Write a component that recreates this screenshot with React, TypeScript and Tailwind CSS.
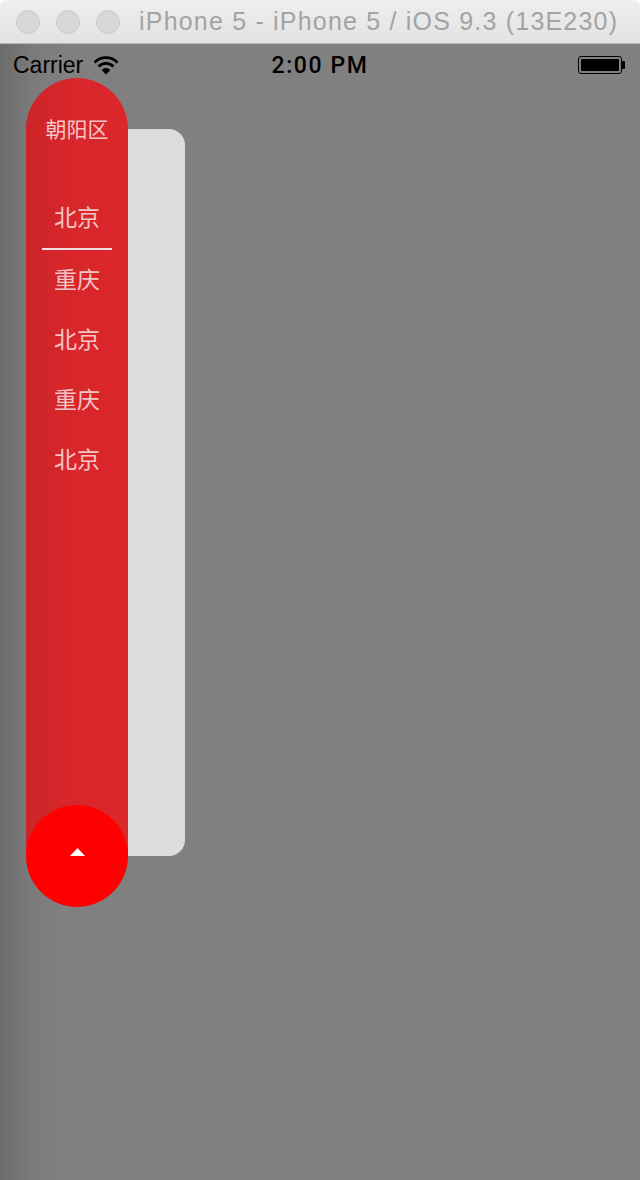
const cities = ["北京", "重庆", "北京", "重庆", "北京"];

const TitleBar = () => (
  <div className="h-[44px] flex items-center pl-[16px] gap-[16px] rounded-t-[6px] bg-[linear-gradient(to_bottom,#eeeeee,#e3e3e3)] border-b border-[#b4b4b4]">
    {[0, 1, 2].map((i) => (
      <span
        key={i}
        className="w-[24px] h-[24px] rounded-full bg-[#d7d7d7] border border-[#cacaca]"
      />
    ))}
    <span className="ml-[3px] text-[25px] tracking-[1.2px] leading-none text-[#a3a3a3] font-['Liberation_Sans',sans-serif]">
      iPhone 5 - iPhone 5 / iOS 9.3 (13E230)
    </span>
  </div>
);

const StatusBar = () => (
  <div className="h-[34px] pt-[8px] px-[13px] flex items-center justify-between text-black font-['Liberation_Sans',sans-serif]">
    <div className="flex items-center gap-[10px] w-[160px]">
      <span className="text-[23px] leading-none">Carrier</span>
      <svg width="26" height="20" viewBox="0 0 26 20" fill="none">
        <path d="M1.5 7.5 A16 16 0 0 1 24.5 7.5" stroke="black" strokeWidth="2.6" />
        <path d="M5.5 11.5 A10.5 10.5 0 0 1 20.5 11.5" stroke="black" strokeWidth="2.6" />
        <path d="M13 19.5 L8.6 15 A6 6 0 0 1 17.4 15 Z" fill="black" />
      </svg>
    </div>
    <span className="text-[23px] leading-none font-medium tracking-[1.6px] font-['Roboto',sans-serif]">
      2:00 PM
    </span>
    <div className="w-[160px] flex justify-end items-center pr-[2px]">
      <div className="w-[44px] h-[18px] rounded-[3px] border border-black p-[2px]">
        <div className="w-full h-full bg-black rounded-[1px]" />
      </div>
      <div className="w-[3px] h-[8px] bg-black rounded-r-[1px]" />
    </div>
  </div>
);

const Picker = () => (
  <div className="flex items-start pl-[26px]">
    <div className="flex flex-col w-[102px]">
      <div className="h-[778px] rounded-t-[51px] pt-[38px] flex flex-col items-center bg-[linear-gradient(to_right,#cb2529,#d9262a_45%,#dc272b)] text-[#f2c6c6] font-['Noto_Sans_CJK_SC',sans-serif]">
        <div className="h-[24px] leading-[24px] text-[21px]">朝阳区</div>
        <div className="mt-[50px] flex flex-col items-center">
          {cities.map((city, i) => (
            <div
              key={i}
              className={`w-[70px] h-[60px] pb-[6px] flex items-center justify-center text-[23px] ${
                i === 0 ? "h-[59px] border-b-2 border-[#f6dede] mb-[1px]" : ""
              }`}
            >
              {city}
            </div>
          ))}
        </div>
      </div>
      <button className="-mt-[51px] w-[102px] h-[102px] rounded-full bg-[#ff0000] flex items-center justify-center">
        <svg width="15" height="8" viewBox="0 0 15 8" className="mb-[8px]">
          <path d="M7.5 0 L15 8 L0 8 Z" fill="white" />
        </svg>
      </button>
    </div>
    <div className="mt-[51px] w-[57px] h-[727px] bg-[#dcdcdc] rounded-r-[16px]" />
  </div>
);

export default function App() {
  return (
    <div className="w-[640px] h-[1180px] bg-white overflow-hidden">
      <TitleBar />
      <div className="h-[1136px] bg-[linear-gradient(to_right,#6c6c6c,#7a7a7a_30px,#808080_60px)]">
        <StatusBar />
        <Picker />
      </div>
    </div>
  );
}
